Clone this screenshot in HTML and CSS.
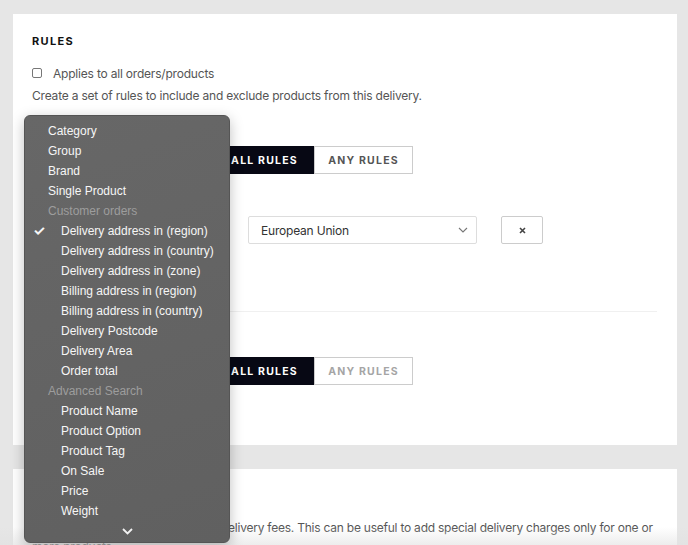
FILE: index.html
```html
<!DOCTYPE html>
<html>
<head>
<meta charset="utf-8">
<link rel="stylesheet" href="styles.css">
</head>
<body>
<div class="page">
  <section class="card card-rules">
    <h2 class="heading">Rules</h2>
    <label class="check-row"><span class="checkbox"></span><span>Applies to all orders/products</span></label>
    <p class="desc">Create a set of rules to include and exclude products from this delivery.</p>

    <div class="block">
      <div class="match-row">
        <span class="match-label">Include products matching</span>
        <div class="seg">
          <span class="seg-btn active">All rules</span>
          <span class="seg-btn">Any rules</span>
        </div>
      </div>
      <div class="rule-row">
        <div class="select type-select">Delivery address in (region)</div>
        <div class="select value-select"><span>European Union</span>
          <svg class="chev" width="10" height="6" viewBox="0 0 10 6"><path d="M1 1l4 4 4-4" fill="none" stroke="#777" stroke-width="1.1"/></svg>
        </div>
        <button class="remove"><svg width="7" height="7" viewBox="0 0 7 7"><path d="M1 1l5 5M6 1L1 6" stroke="#444" stroke-width="1.6"/></svg></button>
      </div>
    </div>

    <div class="divider"></div>

    <div class="block">
      <div class="match-row">
        <span class="match-label">Exclude products matching</span>
        <div class="seg">
          <span class="seg-btn active">All rules</span>
          <span class="seg-btn muted">Any rules</span>
        </div>
      </div>
    </div>
  </section>

  <section class="card card-fees">
    <h2 class="heading">Fees</h2>
    <p class="desc">Use the rules to add extra product delivery fees. This can be useful to add special delivery charges only for one or more products.</p>
  </section>
  <div class="fade"></div>
</div>

<div class="menu">
  <div class="opt">Category</div>
  <div class="opt">Group</div>
  <div class="opt">Brand</div>
  <div class="opt">Single Product</div>
  <div class="grp">Customer orders</div>
  <div class="opt sub checked"><span class="tick">✓</span>Delivery address in (region)</div>
  <div class="opt sub">Delivery address in (country)</div>
  <div class="opt sub">Delivery address in (zone)</div>
  <div class="opt sub">Billing address in (region)</div>
  <div class="opt sub">Billing address in (country)</div>
  <div class="opt sub">Delivery Postcode</div>
  <div class="opt sub">Delivery Area</div>
  <div class="opt sub">Order total</div>
  <div class="grp">Advanced Search</div>
  <div class="opt sub">Product Name</div>
  <div class="opt sub">Product Option</div>
  <div class="opt sub">Product Tag</div>
  <div class="opt sub">On Sale</div>
  <div class="opt sub">Price</div>
  <div class="opt sub">Weight</div>
  <div class="more"><svg width="11" height="7" viewBox="0 0 11 7"><path d="M1 1l4.5 4.5L10 1" fill="none" stroke="#f2f2f2" stroke-width="1.8"/></svg></div>
</div>
</body>
</html>
```

FILE: styles.css
```css
* { box-sizing: border-box; }
html, body { margin: 0; padding: 0; }
body {
  background: #e6e6e6;
  font-family: "Inter", "Liberation Sans", sans-serif;
  width: 688px;
  height: 545px;
  overflow: hidden;
  position: relative;
}
.page {
  padding: 14px 11px 0 13px;
  display: flex;
  flex-direction: column;
  gap: 24px;
}
.card {
  background: #fff;
  width: 664px;
  padding: 19px 20px 0 19px;
}
.card-rules { height: 431px; }
.card-fees { height: 120px; padding-right: 10px; }
.heading {
  margin: 0;
  font-size: 11px;
  line-height: 16px;
  font-weight: 700;
  letter-spacing: 1.3px;
  text-transform: uppercase;
  color: #111;
}
.check-row {
  display: flex;
  align-items: center;
  gap: 11px;
  margin-top: 16px;
  height: 16px;
  font-size: 12px;
  letter-spacing: -0.2px;
  color: #555;
}
.checkbox {
  width: 10px;
  height: 10px;
  border: 1px solid #777;
  border-radius: 2px;
  background: #fff;
  flex: none;
}
.desc {
  margin: 7px 0 0;
  font-size: 12px;
  letter-spacing: -0.2px;
  line-height: 16px;
  color: #555;
}
.card-fees .desc { margin-top: 14px; line-height: 19px; letter-spacing: -0.23px; }
.block { display: flex; flex-direction: column; }
.card-rules > .block:first-of-type { margin-top: 42px; }
.match-row {
  display: flex;
  align-items: center;
  height: 28px;
}
.match-label {
  width: 183px;
  font-size: 12px;
  color: #555;
}
.seg { display: flex; }
.seg-btn {
  width: 99px;
  height: 28px;
  display: flex;
  align-items: center;
  justify-content: center;
  font-size: 10.5px;
  font-weight: 700;
  letter-spacing: 1.2px;
  text-transform: uppercase;
  color: #555;
  border: 1px solid #ccc;
  background: #fff;
}
.seg-btn.active {
  background: #070814;
  border-color: #070814;
  color: #fff;
}
.seg-btn.muted { color: #a5a5a5; }
.rule-row {
  display: flex;
  align-items: center;
  margin-top: 42px;
}
.select {
  height: 28px;
  border: 1px solid #ddd;
  border-radius: 2px;
  display: flex;
  align-items: center;
  padding: 0 12px;
  font-size: 12px;
  letter-spacing: -0.2px;
  color: #333;
}
.type-select { width: 190px; margin-right: 26px; }
.value-select {
  width: 229px;
  justify-content: space-between;
  padding-right: 8px;
}
.remove {
  margin-left: 24px;
  width: 42px;
  height: 28px;
  border: 1px solid #ccc;
  border-radius: 2px;
  background: #fff;
  display: flex;
  align-items: center;
  justify-content: center;
  padding: 0;
}
.divider {
  margin-top: 67px;
  height: 1px;
  background: #f0f0f0;
}
.card-rules > .block:last-of-type { margin-top: 45px; }
.fade {
  position: absolute;
  left: 0;
  right: 0;
  bottom: 0;
  height: 18px;
  background: linear-gradient(to bottom, rgba(230,230,230,0), rgba(225,225,225,0.6));
  pointer-events: none;
}
.menu {
  position: absolute;
  left: 24px;
  top: 115px;
  width: 206px;
  height: 428px;
  padding-top: 5px;
  background: linear-gradient(160deg, #676767, #606060);
  border: 1px solid #555;
  border-radius: 6px;
  box-shadow: 0 4px 14px rgba(0,0,0,0.25);
  font-family: "Liberation Sans", "Inter", sans-serif;
  font-size: 12px;
  color: #f6f6f6;
}
.opt, .grp {
  height: 20px;
  line-height: 20px;
  padding-left: 23px;
  position: relative;
  white-space: nowrap;
}
.opt.sub { padding-left: 36px; }
.grp { color: #9d9d9d; }
.tick {
  position: absolute;
  left: 8px;
  top: 0;
  font-size: 14px;
  font-weight: 700;
}
.more {
  height: 20px;
  display: flex;
  align-items: center;
  justify-content: center;
}
```
